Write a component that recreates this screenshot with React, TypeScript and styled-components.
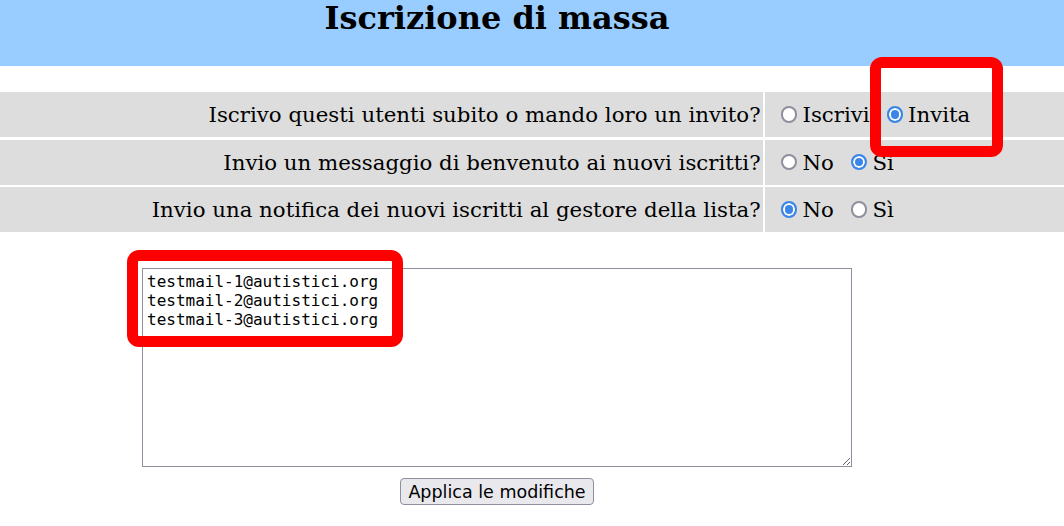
import React from "react";
import styled, { createGlobalStyle } from "styled-components";

const GlobalStyle = createGlobalStyle`
  body {
    margin: 0;
    background: #ffffff;
    font-family: "DejaVu Serif", serif;
    color: #000000;
  }
`;

const Page = styled.div`
  position: relative;
  width: 1064px;
  height: 526px;
  overflow: hidden;
`;

const Header = styled.div`
  height: 66px;
  background: #99ccff;
  padding-right: 70px;
`;

const Title = styled.h1`
  margin: 0;
  font-size: 32px;
  font-weight: bold;
  text-align: center;
  line-height: 37px;
`;

const Table = styled.div`
  margin-top: 26px;
  display: grid;
  grid-template-columns: 762.6px 1fr;
  column-gap: 2.4px;
  row-gap: 2.5px;
  grid-auto-rows: 45px;
`;

const LabelCell = styled.div`
  background: #dddddd;
  font-size: 21.3px;
  display: flex;
  align-items: center;
  justify-content: flex-end;
  padding-right: 2px;
`;

const OptionsCell = styled.div`
  background: #dddddd;
  font-size: 21.3px;
  display: flex;
  align-items: center;
  gap: 17px;
  padding-left: 16px;
`;

const Option = styled.label`
  display: flex;
  align-items: center;
  gap: 5px;
`;

const Radio = styled.input.attrs({ type: "radio" })`
  appearance: none;
  margin: 0;
  width: 16.5px;
  height: 16.5px;
  border-radius: 50%;
  box-sizing: border-box;
  border: 2px solid #8f8f9d;
  background: #ffffff;

  &:checked {
    border-color: #3a86e8;
    background: #3a86e8;
    box-shadow: inset 0 0 0 2px #ffffff;
  }
`;

const FormArea = styled.div`
  width: 994px;
  display: flex;
  flex-direction: column;
  align-items: center;
`;

const Emails = styled.textarea`
  margin-top: 36px;
  width: 710px;
  height: 199px;
  box-sizing: border-box;
  border: 1px solid #8f8f9d;
  padding: 3px 4px;
  font-family: "DejaVu Sans Mono", monospace;
  font-size: 16px;
  line-height: 19px;
  resize: both;
  color: #000000;
`;

const Submit = styled.button`
  margin-top: 11px;
  height: 27px;
  padding: 0 7px;
  font-family: "DejaVu Sans", sans-serif;
  font-size: 17.5px;
  color: #000000;
  background: #e9e9ed;
  border: 1px solid #8f8f9d;
  border-radius: 4px;
`;

const Highlight = styled.div<{ $x: number; $y: number; $w: number; $h: number }>`
  position: absolute;
  left: ${({ $x }) => $x}px;
  top: ${({ $y }) => $y}px;
  width: ${({ $w }) => $w}px;
  height: ${({ $h }) => $h}px;
  box-sizing: border-box;
  border: 11px solid #ff0000;
  border-radius: 12px;
  pointer-events: none;
`;

type Question = {
  label: string;
  name: string;
  options: string[];
  checked: number;
};

const questions: Question[] = [
  {
    label: "Iscrivo questi utenti subito o mando loro un invito?",
    name: "invite",
    options: ["Iscrivi", "Invita"],
    checked: 1,
  },
  {
    label: "Invio un messaggio di benvenuto ai nuovi iscritti?",
    name: "welcome",
    options: ["No", "Sì"],
    checked: 1,
  },
  {
    label: "Invio una notifica dei nuovi iscritti al gestore della lista?",
    name: "notify",
    options: ["No", "Sì"],
    checked: 0,
  },
];

const App = () => {
  return (
    <>
      <GlobalStyle />
      <Page>
        <Header>
          <Title>Iscrizione di massa</Title>
        </Header>

        <Table>
          {questions.map((q) => (
            <React.Fragment key={q.name}>
              <LabelCell>{q.label}</LabelCell>
              <OptionsCell>
                {q.options.map((opt, i) => (
                  <Option key={opt}>
                    <Radio name={q.name} defaultChecked={i === q.checked} />
                    {opt}
                  </Option>
                ))}
              </OptionsCell>
            </React.Fragment>
          ))}
        </Table>

        <FormArea>
          <Emails
            defaultValue={
              "testmail-1@autistici.org\ntestmail-2@autistici.org\ntestmail-3@autistici.org"
            }
          />
          <Submit>Applica le modifiche</Submit>
        </FormArea>

        <Highlight $x={870} $y={57} $w={133} $h={100} />
        <Highlight $x={127} $y={250} $w={276} $h={97} />
      </Page>
    </>
  );
};

export default App;
